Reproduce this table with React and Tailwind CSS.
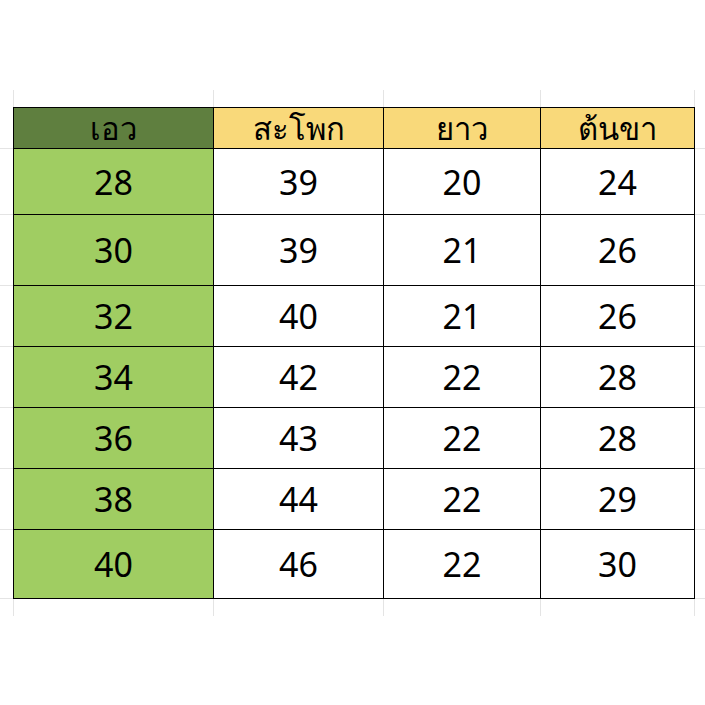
import React from 'react';

const HEADERS = ['เอว', 'สะโพก', 'ยาว', 'ต้นขา'];

const ROWS = [
  { h: 'h-[66px]', cells: [28, 39, 20, 24] },
  { h: 'h-[71px]', cells: [30, 39, 21, 26] },
  { h: 'h-[61px]', cells: [32, 40, 21, 26] },
  { h: 'h-[61px]', cells: [34, 42, 22, 28] },
  { h: 'h-[61px]', cells: [36, 43, 22, 28] },
  { h: 'h-[61px]', cells: [38, 44, 22, 29] },
  { h: 'h-[69px]', cells: [40, 46, 22, 30] },
];

// cell widths include their own right border (first one also its left border)
const COLS = ['w-[201px] border-l', 'w-[170px]', 'w-[157px]', 'w-[154px]'];
const STUBS = ['w-[200px]', 'w-[170px]', 'w-[157px]', 'w-[154px]'];

// faint spreadsheet gridline stubs around the table
const Stubs = () => (
  <div className="flex h-[17px]">
    <div className="w-[13px] shrink-0" />
    {STUBS.map((w, i) => (
      <div key={i} className={`${w} shrink-0 border-l border-[#e4e4e4]`} />
    ))}
    <div className="w-[11px] shrink-0 border-l border-[#e4e4e4]" />
  </div>
);

export default function App() {
  return (
    <div
      className="w-[705px] h-[705px] bg-white pt-[90px]"
      style={{ fontFamily: '"Noto Sans", Tahoma, "DejaVu Sans", sans-serif' }}
    >
      <Stubs />

      {/* header */}
      <div className="flex h-[42px]">
        <div className="w-[13px] shrink-0 border-b border-[#e4e4e4]" />
        {HEADERS.map((t, i) => (
          <div
            key={i}
            className={`${COLS[i]} shrink-0 border-t border-r border-b border-black ${i === 0 ? 'bg-[#5f7f3f]' : 'bg-[#f9d97a]'} flex items-center justify-center text-[31px] leading-none text-black`}
          >
            {t}
          </div>
        ))}
        <div className="w-[10px] shrink-0 border-b border-[#e4e4e4]" />
      </div>

      {ROWS.map((r, ri) => (
        <div key={ri} className={`flex ${r.h}`}>
          <div className="w-[13px] shrink-0 border-b border-[#e4e4e4]" />
          {r.cells.map((v, i) => (
            <div
              key={i}
              className={`${COLS[i]} shrink-0 border-r border-b border-black ${i === 0 ? 'bg-[#a0cd62]' : 'bg-white'} flex items-center justify-center text-[34px] leading-none text-black`}
            >
              {v}
            </div>
          ))}
          <div className="w-[10px] shrink-0 border-b border-[#e4e4e4]" />
        </div>
      ))}

      <Stubs />
    </div>
  );
}
